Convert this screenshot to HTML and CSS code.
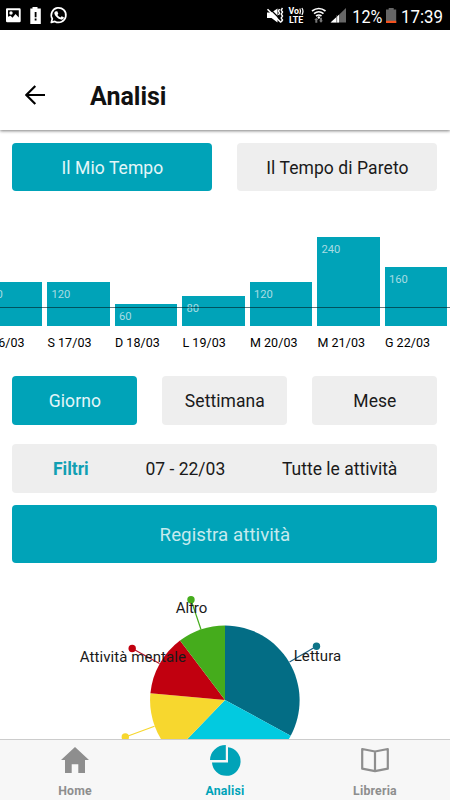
FILE: index.html
```html
<!DOCTYPE html>
<html lang="it">
<head>
<meta charset="utf-8">
<meta name="viewport" content="width=device-width, initial-scale=1">
<title>Analisi</title>
<link rel="stylesheet" href="styles.css">
</head>
<body>
<div class="app">
  <div class="status">
    <svg class="status-art" viewBox="0 0 450 30">
      <g fill="#fff">
        <path fill-rule="evenodd" d="M7 8.300h12.500q1.200 0 1.200 1.200v11.500q0 1.200-1.200 1.200H7.200Q6 22.200 6 21V9.300q0-1 1-1zM8 10.200v6.500l2.500-1 2 2 3-3.700 3.300 3.500v-7.300z"/>
        <circle cx="11" cy="13" r="1.700"/>
        <path d="M30.300 8.500h2.200V7h5v1.500h3.300V24H30.300z"/>
      </g>
      <path d="M35.600 12v5.200M35.600 18.500v2" stroke="#000" stroke-width="1.800"/>
      <path d="M51.300 22.400l1-3.600a7.300 7.300 0 1 1 2.600 2.600z" fill="none" stroke="#fff" stroke-width="1.700" stroke-linejoin="round"/>
      <path d="M55.800 11.200l1.500.1 1 2.400-.9 1.300q1.100 1.800 3.100 2.500l1.100-1.300 2.300 1.100q.2 1.700-1.800 2.300c-3.200.4-7.600-3.600-7.800-6.500q.1-1.300 1.500-1.900z" fill="#fff"/>
      <path d="M267 12.500h4.500l6-4v14l-6-4.500H267z" fill="#fff"/>
      <path d="M269.500 8.500l12 12" stroke="#000" stroke-width="1.300"/>
      <path d="M267.500 9.300L281 22.500" stroke="#fff" stroke-width="1.600"/>
      <path d="M279.500 9l-1 2 1 2-1 2M282.500 8l-1.300 2 1.300 2-1.300 2 1.300 2-1.300 2 1.300 2-1.300 2" fill="none" stroke="#fff" stroke-width="1.400"/>
      <g class="badge-text">
        <text x="288.500" y="14.400" textLength="10.500" lengthAdjust="spacingAndGlyphs">Vo</text>
        <text x="289" y="23" textLength="14.200" lengthAdjust="spacingAndGlyphs">LTE</text>
      </g>
      <path d="M299.800 8.500q1.600 2.700 0 5.600M301.900 8q2.200 3.400 0 6.800" fill="none" stroke="#fff" stroke-width="1.200"/>
      <g fill="none" stroke="#fff" stroke-width="1.700">
        <path d="M312 11q6.800-5 13.500 0M314 13.600q4.800-3.700 9.500 0M316 16q2.800-2 5.500 0"/>
      </g>
      <circle cx="318.800" cy="17.500" r="1.200" fill="#fff"/>
      <path d="M316.300 17.800l2 2.200h-1v2.700h-2V20h-1zM321 22.700l2-2.200h-1v-2.700h-2v2.700h-1z" fill="#777"/>
      <path d="M346 8v14.500H331z" fill="#666"/>
      <path d="M339 14.700v7.800h-8.500z" fill="#fff"/>
      <path d="M336.700 15v8" stroke="#555" stroke-width=".7"/>
      <path d="M386 9.500h2.700V8h5v1.500h2.500V23H386z" fill="#666"/>
      <path d="M386 20.800h10.200V23H386z" fill="#f4511e"/>
      <g class="status-text">
        <text x="352.300" y="22.500" textLength="30" lengthAdjust="spacingAndGlyphs">12%</text>
        <text x="401" y="22.500" textLength="42" lengthAdjust="spacingAndGlyphs">17:39</text>
      </g>
    </svg>
  </div>

  <header class="header">
    <svg class="back" viewBox="0 0 20 20"><path d="M20 10H1.500M10.300 1L1.300 10l9 9" fill="none" stroke="#000" stroke-width="2.200"/></svg>
    <h1 class="title">Analisi</h1>
  </header>

  <main class="content">
    <div class="row tabs">
      <div class="button active">Il Mio Tempo</div>
      <div class="button">Il Tempo di Pareto</div>
    </div>

    <div class="chart">
      <div class="day"><div class="bar" style="height:44.300px">120</div><span class="date">V 16/03</span></div>
      <div class="day"><div class="bar" style="height:44.300px">120</div><span class="date">S 17/03</span></div>
      <div class="day"><div class="bar" style="height:22.150px">60</div><span class="date">D 18/03</span></div>
      <div class="day"><div class="bar" style="height:29.530px">80</div><span class="date">L 19/03</span></div>
      <div class="day"><div class="bar" style="height:44.300px">120</div><span class="date">M 20/03</span></div>
      <div class="day"><div class="bar" style="height:88.600px">240</div><span class="date">M 21/03</span></div>
      <div class="day"><div class="bar" style="height:59.070px">160</div><span class="date">G 22/03</span></div>
      <div class="average"></div>
    </div>

    <div class="row periods">
      <div class="button active">Giorno</div>
      <div class="button">Settimana</div>
      <div class="button">Mese</div>
    </div>

    <div class="filters">
      <strong class="filter-title">Filtri</strong>
      <span class="filter-range">07 - 22/03</span>
      <span class="filter-kind">Tutte le attività</span>
    </div>

    <div class="register">Registra attività</div>

    <svg class="pie" viewBox="0 580 450 159">
      <path fill="#036d85" d="M225 700V625.500A74.800 74.800 0 0 1 290.700 735.700z"/>
      <path fill="#02cae0" d="M225 700L290.700 735.700A74.800 74.800 0 0 1 173 754z"/>
      <path fill="#f7d72e" d="M225 700L173 754A74.800 74.800 0 0 1 150.400 693.200z"/>
      <path fill="#c1000f" d="M225 700L150.400 693.200A74.800 74.800 0 0 1 180 640.600z"/>
      <path fill="#45ac1c" d="M225 700L180 640.600A74.800 74.800 0 0 1 225 625.500z"/>
      <g stroke-width="1.200">
        <path stroke="#1c5e83" d="M289.500 662L316.500 646.200"/>
        <path stroke="#f7d72e" d="M154.500 726.200L125.300 737"/>
        <path stroke="#b51226" d="M159.500 663.500L132.200 648.500"/>
        <path stroke="#45ac1c" d="M201 629.500L191 599.800"/>
      </g>
      <circle cx="316.500" cy="646.200" r="3.700" fill="#0e7488"/>
      <circle cx="125.300" cy="737" r="3.700" fill="#f7d72e"/>
      <circle cx="132.200" cy="648.500" r="3.700" fill="#c1000f"/>
      <circle cx="191" cy="599.800" r="3.700" fill="#45ac1c"/>
      <g class="pie-label">
        <text x="175.700" y="613.400" textLength="31.500">Altro</text>
        <text x="79.700" y="662.200" textLength="106.300">Attività mentale</text>
        <text x="293.700" y="660.500" textLength="47.500">Lettura</text>
      </g>
    </svg>
  </main>

  <nav class="nav">
    <div class="nav-item">
      <svg class="nav-icon" viewBox="0 0 34 34"><path fill="#8e8e8e" d="M17 3L31 16h-4v13h-6.700v-8.700h-6.600V29H7V16H3z"/></svg>
      <span>Home</span>
    </div>
    <div class="nav-item current">
      <svg class="nav-icon" viewBox="0 0 34 34"><path fill="#00a3b8" d="M17.800 16H2A15.800 15 0 0 1 17.800 1zM20 3.300A14.300 14.300 0 1 1 4 18.400H20z"/></svg>
      <span>Analisi</span>
    </div>
    <div class="nav-item">
      <svg class="nav-icon" viewBox="0 0 34 34"><path d="M17 7.500L4.200 5v19.700L17 27.200l12.800-2.500V5zV27.200" fill="none" stroke="#8e8e8e" stroke-width="2.200" stroke-linejoin="round"/></svg>
      <span>Libreria</span>
    </div>
  </nav>
</div>
</body>
</html>
```
FILE: styles.css
```css
* { box-sizing: border-box; }
body { margin: 0; font-family: Roboto, sans-serif; color: #1a1a1a; background: #fff; }
.app { width: 450px; height: 800px; display: flex; flex-direction: column; overflow: hidden; }
.status { height: 30px; background: #000; flex: none; }
.status-art { display: block; width: 450px; height: 30px; }
.status-text { font: 400 19px Roboto, sans-serif; fill: #fff; }
.badge-text { font: 700 8.500px Roboto, sans-serif; fill: #fff; }
.header { height: 100px; flex: none; display: flex; align-items: center; padding: 32px 25px 0; background: #fff; box-shadow: 0 1px 3px rgba(0, 0, 0, .5); z-index: 1; }
.back { width: 20px; height: 20px; margin-top: -2px; }
.title { margin: 2px 0 0 45px; font-size: 25px; line-height: 30px; font-weight: 700; color: #111; }
.content { flex: 1; min-height: 0; overflow: hidden; display: flex; flex-direction: column; padding-top: 12.500px; }
.row { display: flex; gap: 25px; margin: 0 12.600px 0 12.400px; flex: none; }
.button { flex: 1; height: 48.750px; display: flex; align-items: center; justify-content: center; padding-top: 2px; border-radius: 4px; background: #eee; font-size: 17.500px; letter-spacing: .08px; white-space: nowrap; }
.active { background: #00a3b8; color: #e4f6f8; }
.chart { position: relative; height: 114px; flex: none; display: flex; gap: 5px; margin: 45.750px 0 0 -20.100px; align-items: flex-end; }
.day { width: 62.500px; flex: none; display: flex; flex-direction: column; }
.bar { background: #00a3b8; color: #a8dce3; font-size: 11.200px; line-height: 14px; padding: 6px 0 0 4px; }
.date { font-size: 12.500px; line-height: 16px; margin-top: 9px; height: 16px; letter-spacing: .05px; color: #000; white-space: nowrap; }
.average { position: absolute; left: 0; right: 0; bottom: 43px; height: 1px; background: rgba(0, 30, 35, .6); }
.periods { margin-top: 25px; }
.filters { height: 48.750px; flex: none; margin: 19px 12.600px 0 12.400px; display: flex; align-items: center; padding: 2px 40px 0 40.500px; justify-content: space-between; background: #eee; border-radius: 4px; font-size: 17.500px; }
.filter-title { color: #119fb3; }
.register { height: 58px; flex: none; margin: 12px 12.600px 0 12.400px; display: flex; align-items: center; justify-content: center; padding-top: 2px; border-radius: 4px; background: #00a3b8; color: #c6eaee; font-size: 18.700px; letter-spacing: .05px; }
.pie { display: block; width: 450px; height: 159px; flex: none; margin-top: auto; }
.pie-label { font: 400 15px Roboto, sans-serif; fill: #1a1a1a; }
.nav { height: 61px; flex: none; border-top: 1px solid #ccc; background: #f7f7f7; display: flex; }
.nav-item { flex: 1; display: flex; flex-direction: column; align-items: center; padding-top: 4px; font-size: 12.300px; line-height: 16px; font-weight: 700; letter-spacing: .2px; color: #8e8e8e; }
.nav-icon { width: 34px; height: 34px; margin-bottom: 5px; }
.current { color: #00a3b8; }
```
